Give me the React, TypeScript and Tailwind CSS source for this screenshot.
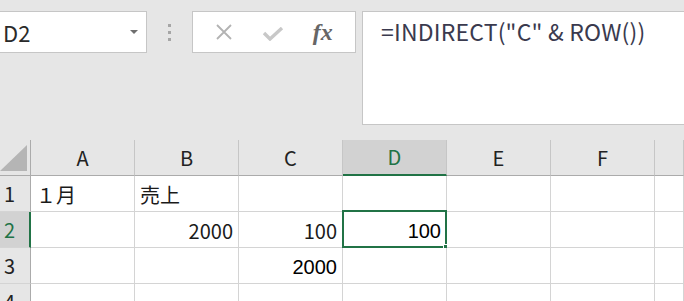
import React from "react"

const ui = { fontFamily: '"Noto Sans CJK JP", "Noto Sans", sans-serif' }
const arial = { fontFamily: '"Liberation Sans", Arial, sans-serif' }

const cols = ["A", "B", "C", "D", "E", "F", "G"]
const active = "D"

type Cell = { text: string; align?: "left" | "right"; font?: "ui" | "arial" }

const data: Record<number, Record<string, Cell>> = {
  1: { A: { text: "１月" }, B: { text: "売上" } },
  2: {
    B: { text: "2000", align: "right" },
    C: { text: "100", align: "right" },
    D: { text: "100", align: "right", font: "arial" },
  },
  3: { C: { text: "2000", align: "right", font: "arial" } },
  4: {},
}

function FormulaBar() {
  return (
    <div className="flex items-start h-[140px] pt-[11px]">
      {/* Name box */}
      <div className="w-[147px] h-[42px] shrink-0 bg-white border border-l-0 border-[#c6c6c6] flex items-center justify-between pl-[3px] pr-[8px]">
        <span className="text-[22px] text-[#2a2a2a] leading-none" style={ui}>
          D2
        </span>
        <svg width="8" height="5" viewBox="0 0 8 5">
          <path d="M0 0 L8 0 L4 4 Z" fill="#6f6f6f" />
        </svg>
      </div>

      {/* Grip */}
      <div className="w-[45px] h-[42px] shrink-0 flex flex-col items-center justify-center gap-[4px]">
        <span className="w-[3px] h-[3px] bg-[#a6a6a6]" />
        <span className="w-[3px] h-[3px] bg-[#a6a6a6]" />
        <span className="w-[3px] h-[3px] bg-[#a6a6a6]" />
      </div>

      {/* Cancel / enter / fx */}
      <div className="w-[164px] h-[42px] shrink-0 bg-white border border-[#c6c6c6] flex items-center justify-around px-[8px]">
        <svg width="18" height="18" viewBox="0 0 18 18">
          <path d="M2 2 L16 16 M16 2 L2 16" stroke="#b3b3b3" strokeWidth="1.8" />
        </svg>
        <svg width="22" height="14" viewBox="0 0 22 14" className="mt-[4px]">
          <path d="M2 6 L8 12 L20 1" stroke="#c8c8c8" strokeWidth="3.4" fill="none" />
        </svg>
        <span className="text-[24px] italic font-bold text-[#666] leading-none" style={{ fontFamily: '"Liberation Serif", serif' }}>
          fx
        </span>
      </div>

      {/* Formula input */}
      <div className="ml-[6px] flex-1 h-[114px] bg-white border border-r-0 border-[#c6c6c6] pl-[18px] pt-[8px]">
        <span className="text-[23px] tracking-[0.2px] text-[#3a3a4e] leading-none" style={ui}>
          =INDIRECT("C" &amp; ROW())
        </span>
      </div>
    </div>
  )
}

function Grid() {
  return (
    <div className="grid grid-cols-[31px_repeat(6,104px)_1fr] grid-rows-[36px_36px_36px_36px_36px]">
      {/* Corner */}
      <div className="border-r border-b border-[#ababab] flex items-end justify-end pr-[3px] pb-[4px]">
        <svg width="27" height="26" viewBox="0 0 27 26">
          <path d="M27 0 L27 26 L0 26 Z" fill="#b5b5b5" />
        </svg>
      </div>
      {cols.map((c) => (
        <div
          key={c}
          className={
            c === active
              ? "bg-[#d2d2d2] border-r border-[#c6c6c6] border-b-2 border-b-[#217346] flex items-center justify-center text-[20px] text-[#217346]"
              : "border-r border-[#c6c6c6] border-b border-b-[#ababab] flex items-center justify-center text-[20px] text-[#222]"
          }
          style={ui}
        >
          {c === "G" ? "" : c}
        </div>
      ))}

      {[1, 2, 3, 4].map((r) => (
        <React.Fragment key={r}>
          <div
            className={
              r === 2
                ? "bg-[#d2d2d2] border-r-2 border-r-[#217346] border-b border-b-[#d4d4d4] flex items-center pl-[4px] text-[20px] text-[#217346]"
                : "border-r border-r-[#ababab] border-b border-b-[#d4d4d4] flex items-center pl-[4px] text-[20px] text-[#222]"
            }
            style={ui}
          >
            {r}
          </div>
          {cols.map((c) => {
            const cell = data[r][c]
            const isActive = r === 2 && c === active
            return (
              <div
                key={c}
                className={
                  "relative bg-white border-r border-b border-[#d4d4d4] flex items-end px-[5px] pb-[6px] " +
                  (cell?.align === "right" ? "justify-end" : "justify-start")
                }
              >
                {cell && (
                  <span
                    className={
                      cell.font === "arial"
                        ? "text-[20px] leading-none text-black"
                        : "text-[20px] leading-none text-[#1a1a1a]"
                    }
                    style={cell.font === "arial" ? arial : ui}
                  >
                    {cell.text}
                  </span>
                )}
                {isActive && (
                  <>
                    <div className="absolute -left-[1px] -top-[2px] -right-[1px] -bottom-[1px] border-2 border-[#217346]" />
                    <div className="absolute -right-[4px] -bottom-[4px] w-[7px] h-[7px] bg-[#217346] border border-white" />
                  </>
                )}
              </div>
            )
          })}
        </React.Fragment>
      ))}
    </div>
  )
}

export default function App() {
  return (
    <div className="w-[684px] h-[301px] overflow-hidden bg-[#e6e6e6]">
      <FormulaBar />
      <Grid />
    </div>
  )
}
